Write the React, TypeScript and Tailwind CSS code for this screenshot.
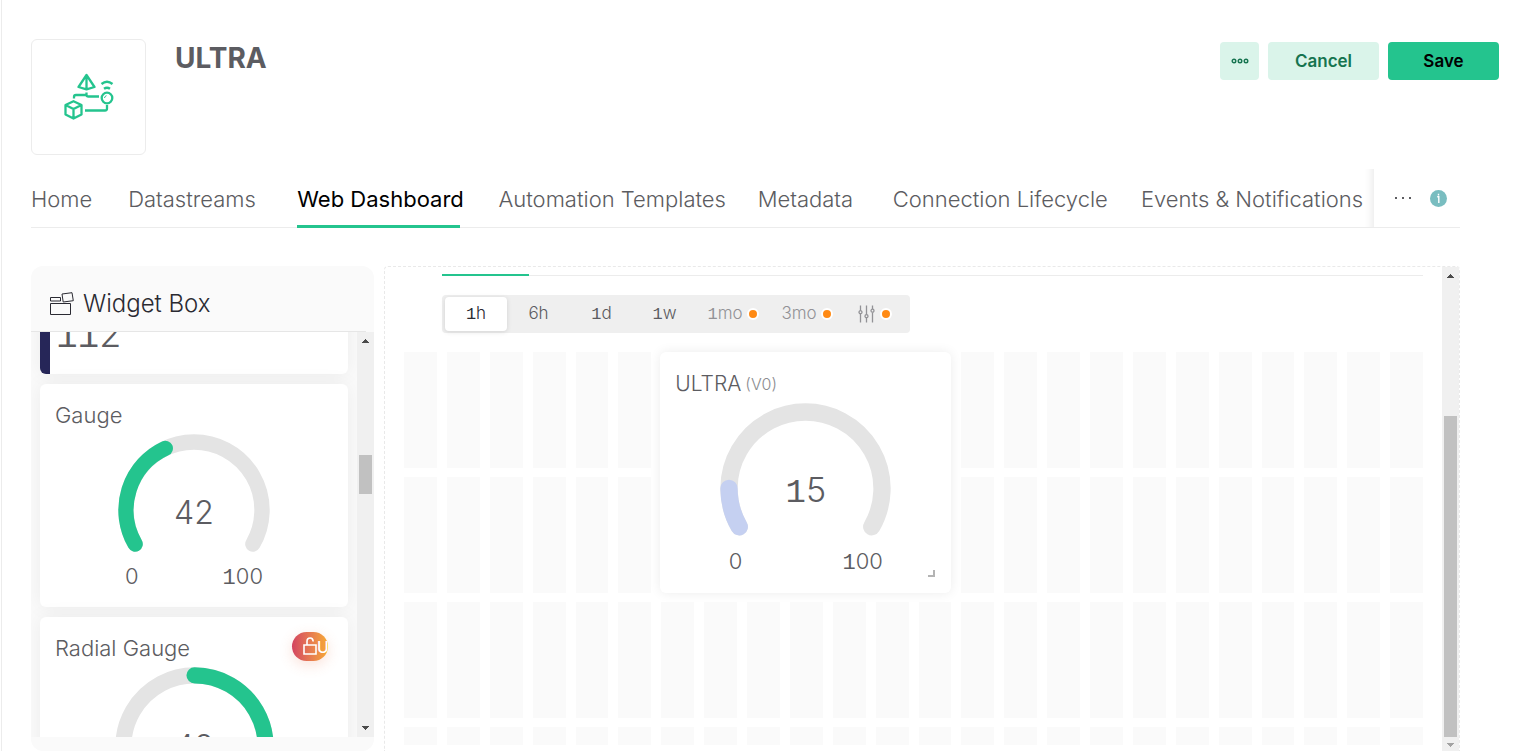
import { Fragment, type ReactNode } from "react";

const tabs = [
  { label: "Home", width: "w-[59px]" },
  { label: "Datastreams", width: "w-[131px]" },
  { label: "Web Dashboard", width: "w-[163px]" },
  { label: "Automation Templates", width: "w-[221px]" },
  { label: "Metadata", width: "w-[97px]" },
  { label: "Connection Lifecycle", width: "w-[210px]" },
  { label: "Events & Notifications", width: "w-[218px]" },
];

const ranges = ["1h", "6h", "1d", "1w"];

/* Sets every figure one with a foot serif, the rest in the page's face. */
function Figures({ text }: { text: string }) {
  return (
    <>
      {text.split(/(1+)/).map((part, i) =>
        part.startsWith("1") ? (
          <span key={i} className="font-['Liberation_Mono',monospace]">
            {part}
          </span>
        ) : (
          <Fragment key={i}>{part}</Fragment>
        ),
      )}
    </>
  );
}

function arc(r: number, from: number, to: number) {
  const point = (deg: number) => {
    const a = (deg * Math.PI) / 180;
    return `${(r * Math.cos(a)).toFixed(2)} ${(-r * Math.sin(a)).toFixed(2)}`;
  };
  return `M${point(from)}A${r} ${r} 0 ${from - to > 180 ? 1 : 0} 1 ${point(to)}`;
}

type DialProps = {
  from: number;
  to: number;
  stroke: string;
  className: string;
};

function Dial({ from, to, stroke, className }: DialProps) {
  return (
    <svg viewBox="-76 -76 152 120" className={className} fill="none" strokeWidth={15.4} strokeLinecap="round" aria-hidden="true">
      <path d={arc(68, 210, -30)} stroke="#e4e4e4" />
      <path d={arc(68, from, to)} stroke={stroke} />
    </svg>
  );
}

function Arrow({ up, className }: { up?: boolean; className: string }) {
  return (
    <svg viewBox="0 0 7 4" className={`h-1 w-[7px] ${className}`} fill="currentColor" shapeRendering="crispEdges" aria-hidden="true">
      <path d={up ? "M3 0h1v1h1v1h1v1h1v1H0V3h1V2h1V1h1z" : "M0 0h7v1H6v1H5v1H4v1H3V3H2V2H1V1H0z"} />
    </svg>
  );
}

function Logo() {
  return (
    <svg viewBox="0 0 50 48" className="h-12 w-[50px]" fill="none" stroke="#24c48e" strokeWidth="2.3" strokeLinejoin="round" aria-hidden="true">
      <path d="M22.500 2 14.500 14l8 2.300 8-2.300zM22.500 2v14" />
      <path d="M9.500 28.200 17.500 32v9.500l-8 4-8-4V32zM1.500 32l8 4 8-4M9.500 36v9.500" />
      <path d="M10 25.500V24q0-2 2-2h11.500M22.500 19.500v2.500q0 1.500 2 1.500H35" />
      <path d="M21 37.500h20q2 0 2-2V32" />
      <circle cx="43" cy="25" r="5.300" />
      <path d="M40.500 25q.3-2 2-2.300" strokeWidth="1" />
      <path d="M37.500 11q5.500-4.500 11 0M40 15.800q3-2 6 0" strokeWidth="2.400" />
    </svg>
  );
}

function WidgetBoxIcon() {
  return (
    <svg viewBox="0 0 24 24" className="size-6" fill="none" stroke="#2a2a32" strokeWidth="1" aria-hidden="true">
      <path d="M.5 11.500h20v11H.5zM.5 5.500h10v3.500H.5zM12 2l10-1.300 1.300 8L13.200 10z" />
    </svg>
  );
}

function SlidersIcon() {
  return (
    <svg viewBox="0 0 18 18" className="h-[18px] w-[18px]" fill="none" stroke="currentColor" strokeWidth="1.300" aria-hidden="true">
      <path d="M2.500 .5v5M2.500 9v8.500M8.500 .5v9M8.500 13v4.500M14.500 .5v3.500M14.500 7.500v10" />
      <circle cx="2.500" cy="7.200" r="1.500" />
      <circle cx="8.500" cy="11.200" r="1.500" />
      <circle cx="14.500" cy="5.700" r="1.500" />
    </svg>
  );
}

function LockedDot() {
  return <span className="size-3 rounded-full border-2 border-white bg-[#ff8a14]" />;
}

function WidgetCard({ title, badge, children }: { title: string; badge?: ReactNode; children: ReactNode }) {
  return (
    <article className="h-[223px] shrink-0 rounded-md bg-white shadow-[0_0_20px_rgba(0,0,0,0.06)]">
      <div className="flex h-[50px] items-start justify-between pt-[15px] pr-5 pl-[15px]">
        <h3 className="text-[22px] leading-8 font-light">{title}</h3>
        {badge}
      </div>
      {children}
    </article>
  );
}

function UpgradeBadge() {
  return (
    <button className="flex h-[29px] w-9 items-center overflow-hidden rounded-full bg-linear-to-r from-[#d3435f] to-[#f6a92e] pl-[11px] text-base font-medium text-white shadow-[0_4px_14px_rgba(230,110,70,0.2)]">
      <svg viewBox="0 0 14 18" className="-mt-0.5 h-[18px] w-[14px] shrink-0" fill="none" stroke="currentColor" strokeWidth="1.600" aria-hidden="true">
        <path d="M1 8h12v9H1zM4 8V4.500Q4 1 7.200 1 10 1 10.200 4.500" />
      </svg>
      <span>Upgrade</span>
    </button>
  );
}

export default function App() {
  return (
    <div className="ml-px flex h-screen flex-col overflow-hidden border-l border-[#ececec] bg-white pl-[29px] font-['Inter',sans-serif] text-[#5c5c61]">
      <header className="flex shrink-0 items-start pt-[39px] pr-4">
        <div className="flex h-[116px] w-[115px] items-center justify-center rounded-md border border-[#ececec]">
          <Logo />
        </div>
        <h1 className="pl-[29px] text-[28px] leading-[38px] font-bold">ULTRA</h1>
        <div className="ml-auto flex gap-[9px] pt-[3px] text-[17px] font-semibold">
          <button aria-label="More actions" className="flex h-[38px] w-[39px] items-center justify-center rounded bg-[#daf4ea] text-[#167450]">
            <svg viewBox="0 0 18 6" className="h-[6px] w-[18px]" fill="none" stroke="currentColor" strokeWidth="1.400" aria-hidden="true">
              <circle cx="3" cy="3" r="1.800" />
              <circle cx="9" cy="3" r="1.800" />
              <circle cx="15" cy="3" r="1.800" />
            </svg>
          </button>
          <button className="h-[38px] w-[111px] rounded bg-[#daf4ea] pt-0.5 text-[#167450]">Cancel</button>
          <button className="h-[38px] w-[111px] rounded bg-[#24c48e] pt-0.5 text-black">Save</button>
        </div>
      </header>

      <nav className="mt-[14px] mr-[55px] flex h-[59px] shrink-0 border-b border-[#ececec]">
        <div className="flex flex-1 justify-between pr-[15px] text-[22px] leading-[60px] font-light whitespace-nowrap shadow-[inset_-12px_0_8px_-10px_rgba(0,0,0,0.09)]">
          {tabs.map(({ label, width }) => (
            <a
              key={label}
              href="#"
              className={`h-[59px] ${width} ${
                label === "Web Dashboard" ? "border-b-3 border-[#24c48e] font-normal text-black" : ""
              }`}
            >
              {label}
            </a>
          ))}
        </div>
        <div className="flex w-[86px] items-center gap-[19px] pl-[21px]">
          <button aria-label="More tabs" className="flex h-6 w-4 items-center justify-between">
            <span className="size-0.5 bg-[#5c5c61]" />
            <span className="size-0.5 bg-[#5c5c61]" />
            <span className="size-0.5 bg-[#5c5c61]" />
          </button>
          <button aria-label="Information">
            <svg viewBox="0 0 17 17" className="size-[17px]" aria-hidden="true">
              <circle cx="8.500" cy="8.500" r="8.500" fill="#79bdc0" />
              <path d="M7.200 6.700h1.600V13M8.500 3.800v1.600" stroke="#fff" strokeWidth="1.400" fill="none" />
            </svg>
          </button>
        </div>
      </nav>

      <main className="mt-[38px] mr-[55px] flex min-h-0 flex-1 gap-[10px]">
        <aside className="flex w-[343px] shrink-0 flex-col overflow-hidden rounded-xl bg-[#fafafa] pb-[14px]">
          <div className="mr-2 flex h-[66px] shrink-0 items-center gap-[9px] border-b border-[#e6e6e6] pt-[11px] pl-[19px] text-[#2a2a32]">
            <WidgetBoxIcon />
            <h2 className="text-2xl font-light">Widget Box</h2>
          </div>
          <div className="flex min-h-0 flex-1">
            <div className="flex min-w-0 flex-1 flex-col gap-[10px] overflow-hidden pr-[9px] pl-[9px]">
              <article className="-mt-[58px] flex h-[100px] shrink-0 items-start overflow-hidden rounded-md border-l-10 border-[#262658] bg-white pt-10 pl-1.5 shadow-[0_0_20px_rgba(0,0,0,0.06)]">
                <span className="text-4xl font-light">
                  <Figures text="112" />
                </span>
              </article>
              <WidgetCard title="Gauge">
                <div className="relative">
                  <Dial from={210} to={115} stroke="#24c48e" className="mx-auto w-[152px]" />
                  <span className="absolute inset-x-0 top-[59px] text-center text-[32px] leading-10 font-light">42</span>
                </div>
                <div className="mx-auto mt-2 flex w-[138px] justify-between text-[22px] leading-7 font-light">
                  <span>0</span>
                  <span>
                    <Figures text="100" />
                  </span>
                </div>
              </WidgetCard>
              <WidgetCard title="Radial Gauge" badge={<UpgradeBadge />}>
                <div className="relative">
                  <Dial from={90} to={-30} stroke="#24c48e" className="mx-auto w-[159px]" />
                  <span className="absolute inset-x-0 top-[60px] text-center text-[32px] leading-10 font-light">42</span>
                </div>
              </WidgetCard>
            </div>
            <div className="flex w-[17px] flex-col items-center bg-[#f0f0f0] py-[7px] text-[#4b4b4b]">
              <Arrow up className="" />
              <div className="mt-[112px] h-[39px] w-[13px] bg-[#c1c1c1]" />
              <Arrow className="mt-auto" />
            </div>
          </div>
        </aside>

        <section className="flex min-w-0 flex-1 rounded-t border border-b-0 border-dashed border-[#e9e9e9]">
          <div className="min-w-0 flex-1 overflow-hidden pt-[7px] pr-[19px] pl-[19px]">
            <div className="ml-[38px] h-0.5 border-b border-[#ececec]">
              <div className="h-0.5 w-[87px] bg-[#24c48e]" />
            </div>
            <div className="mt-[19px] ml-[38px] flex h-[38px] w-[468px] items-center rounded bg-[#efefef] p-[3px] text-[17px] font-light">
              {ranges.map((range, i) => (
                <button
                  key={range}
                  className={
                    i === 0
                      ? "h-[34px] w-[62px] rounded bg-white text-[#2a2a32] shadow-[0_1px_5px_rgba(0,0,0,0.12)]"
                      : "h-[34px] w-[63px]"
                  }
                >
                  <Figures text={range} />
                </button>
              ))}
              <button className="flex h-[34px] w-[74px] items-center justify-center gap-1 text-[#929296]">
                <span>
                  <Figures text="1mo" />
                </span>
                <LockedDot />
              </button>
              <button className="flex h-[34px] w-[74px] items-center justify-center gap-1 text-[#929296]">
                3mo
                <LockedDot />
              </button>
              <button aria-label="Custom range" className="flex h-[34px] w-[62px] items-center justify-center gap-1 text-[#929296]">
                <SlidersIcon />
                <LockedDot />
              </button>
            </div>

            <div className="mt-[19px] grid grid-cols-24 grid-rows-[116px_116px_116px_18px] gap-x-[10px] gap-y-[9px]">
              <article className="relative z-10 col-span-7 col-start-7 row-span-2 row-start-1 -ml-px rounded-md bg-white pt-4 shadow-[0_0_12px_rgba(0,0,0,0.08)]">
                <h3 className="flex items-center gap-1 pl-[15px] text-[21px] leading-8 font-light">
                  ULTRA <span className="text-base text-[#8c8c90]">(V0)</span>
                </h3>
                <div className="relative mt-[3px]">
                  <Dial from={210} to={180} stroke="#c5d0f1" className="mx-auto w-[171px]" />
                  <span className="absolute inset-x-0 top-[67px] text-center text-[34px] leading-10 font-light">
                    <Figures text="15" />
                  </span>
                </div>
                <div className="mx-auto mt-[9px] flex w-[154px] justify-between text-[22px] leading-7 font-light">
                  <span>0</span>
                  <span>
                    <Figures text="100" />
                  </span>
                </div>
                <span className="absolute right-4 bottom-4 size-[7px] border-r-2 border-b-2 border-[#b4b4b4]" />
              </article>
              {Array.from({ length: 82 }, (_, i) => (
                <div key={i} className="bg-[#fafafa]" />
              ))}
            </div>
          </div>
          <div className="flex w-[17px] flex-col items-center bg-[#f0f0f0] pt-[7px] pb-1">
            <Arrow up className="shrink-0 text-[#4b4b4b]" />
            <div className="mt-[138px] mb-[6px] w-[13px] flex-1 bg-[#c1c1c1]" />
            <Arrow className="shrink-0 text-[#a3a3a3]" />
          </div>
        </section>
      </main>
    </div>
  );
}
